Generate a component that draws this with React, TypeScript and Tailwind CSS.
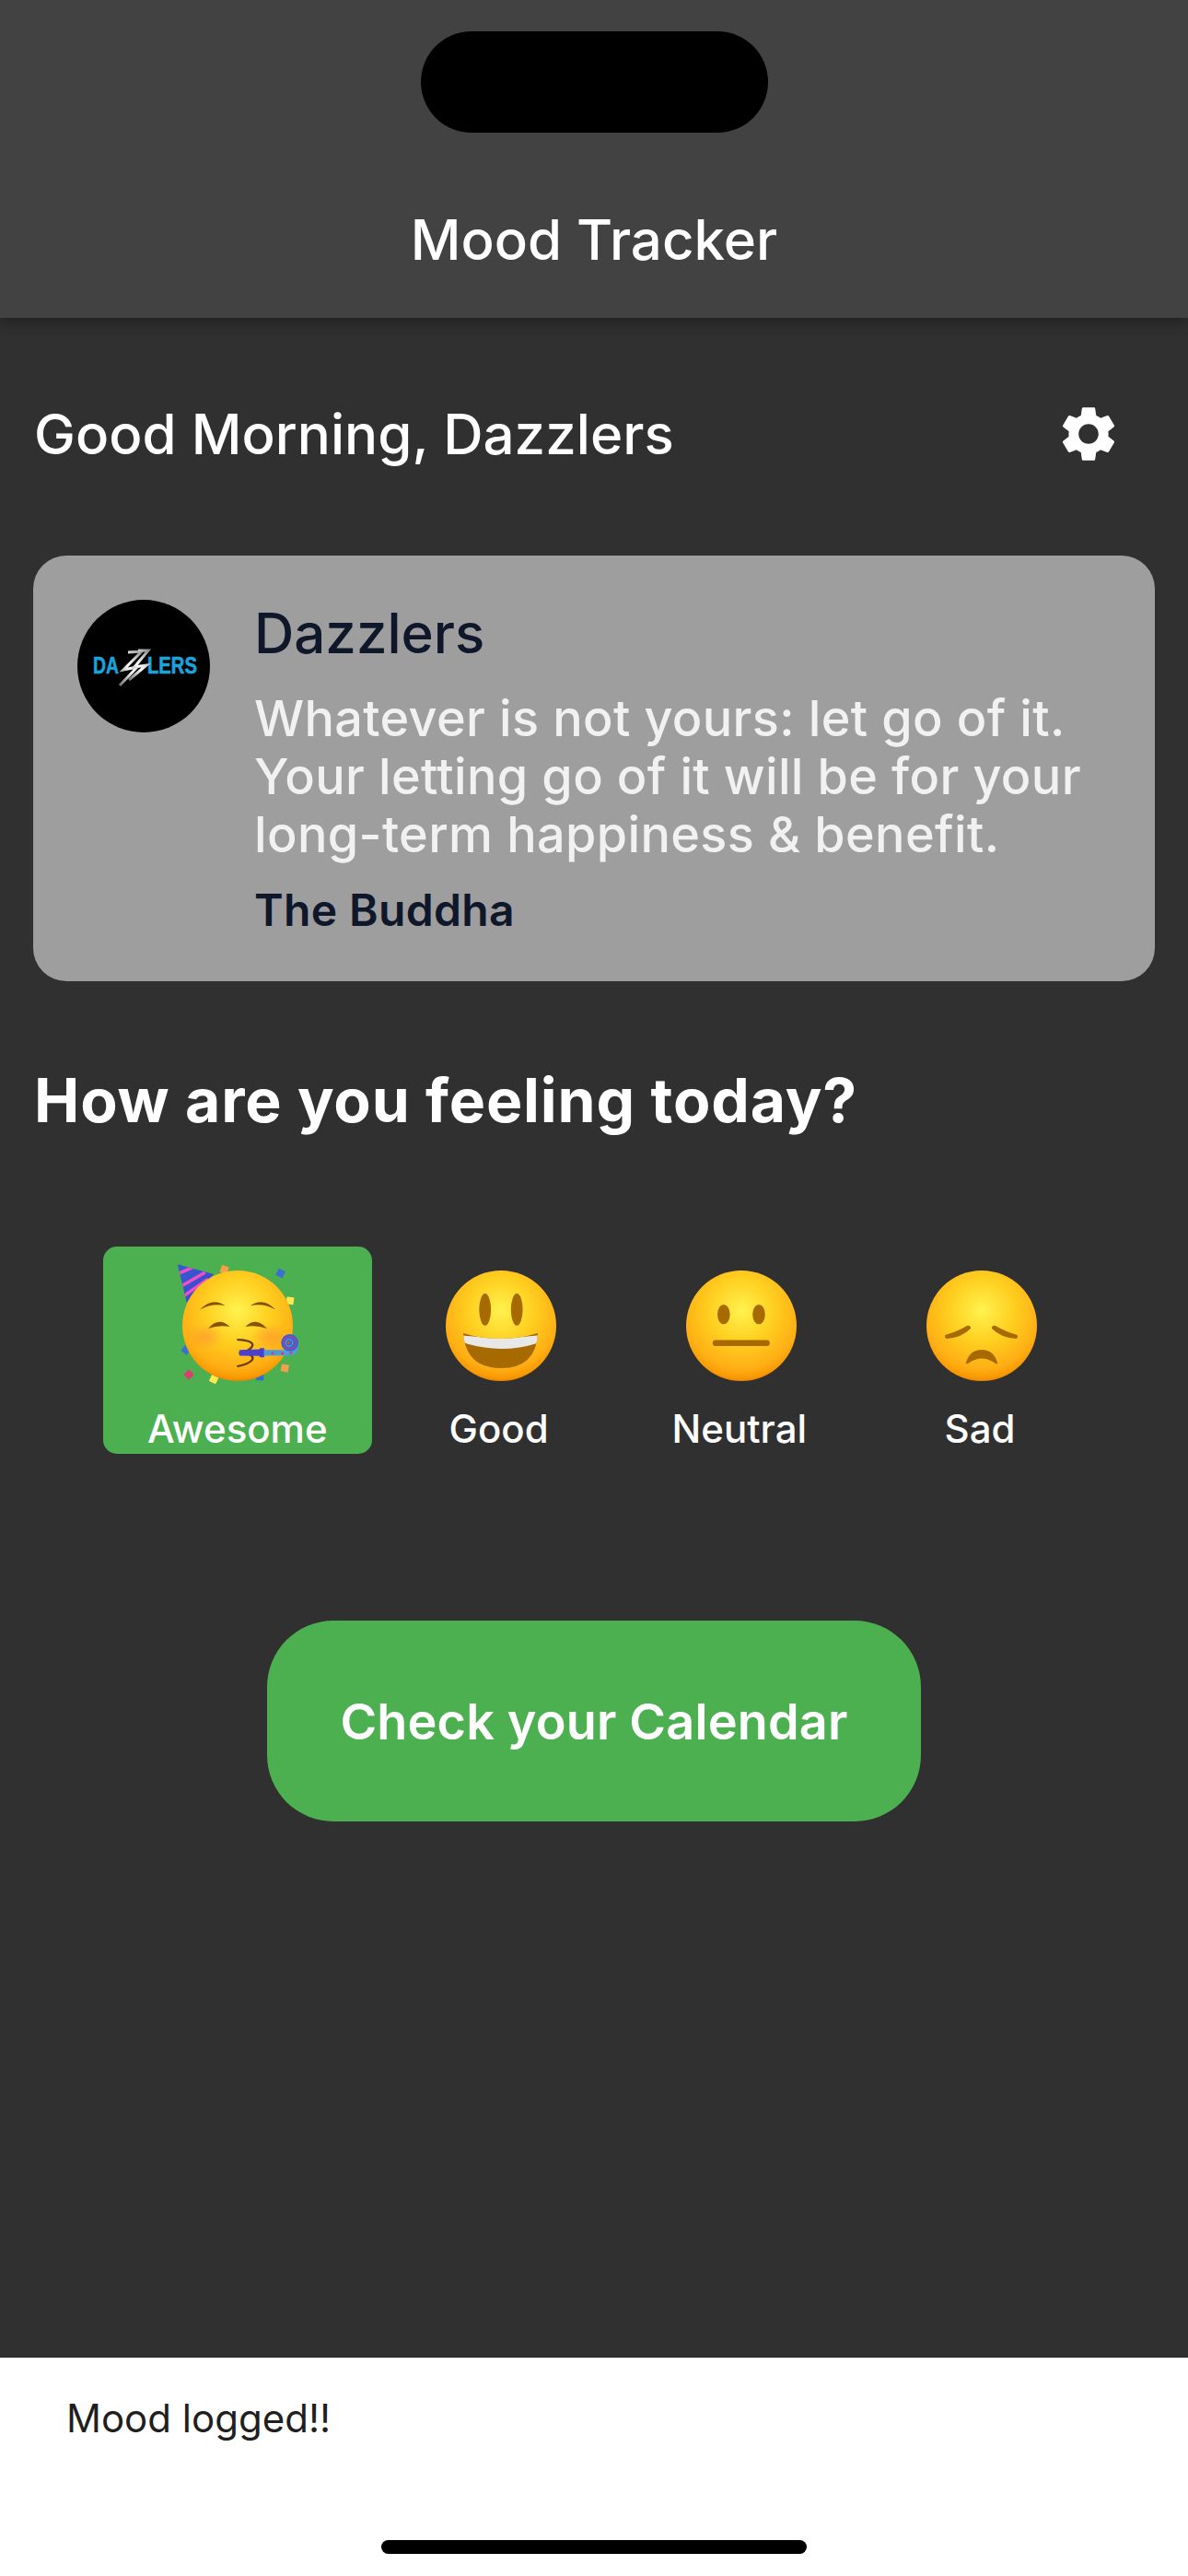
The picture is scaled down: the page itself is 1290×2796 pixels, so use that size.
import React from "react";

function FaceGrad({ id }: { id: string }) {
  return (
    <radialGradient id={id} cx="50%" cy="36%" r="65%">
      <stop offset="0%" stopColor="#FFF24F" />
      <stop offset="45%" stopColor="#FFCF20" />
      <stop offset="82%" stopColor="#FFAE14" />
      <stop offset="94%" stopColor="#F89A05" />
      <stop offset="100%" stopColor="#E47F00" />
    </radialGradient>
  );
}

function GoodFace() {
  return (
    <svg width="120" height="120" viewBox="0 0 120 120" className="block">
      <defs>
        <FaceGrad id="g1" />
        <clipPath id="mouth"><path d="M19 68 Q60 80 100 68 Q98 106 60 106 Q22 106 19 68Z" /></clipPath>
      </defs>
      <circle cx="60" cy="60" r="60" fill="url(#g1)" />
      <ellipse cx="42.7" cy="42.4" rx="6.4" ry="17.3" fill="#A66A00" />
      <ellipse cx="77.2" cy="42.4" rx="6.4" ry="17.3" fill="#A66A00" />
      <path d="M19 68 Q60 80 100 68 Q98 106 60 106 Q22 106 19 68Z" fill="#A66A00" />
      <g clipPath="url(#mouth)">
        <path d="M15 70 Q60 76 104 70 L102 78 Q60 92 18 78Z" fill="#E8E8E8" />
      </g>
    </svg>
  );
}

function NeutralFace() {
  return (
    <svg width="120" height="120" viewBox="0 0 120 120" className="block">
      <defs><FaceGrad id="g2" /></defs>
      <circle cx="60" cy="60" r="60" fill="url(#g2)" />
      <ellipse cx="40.8" cy="47.6" rx="6.8" ry="10.7" fill="#A66A00" />
      <ellipse cx="79" cy="47.6" rx="6.8" ry="10.7" fill="#A66A00" />
      <rect x="28.8" y="75.6" width="62" height="6.5" rx="3" fill="#A66A00" />
    </svg>
  );
}

function SadFace() {
  return (
    <svg width="120" height="120" viewBox="0 0 120 120" className="block">
      <defs><FaceGrad id="g3" /></defs>
      <circle cx="60" cy="60" r="60" fill="url(#g3)" />
      <path d="M20.5 70 Q34 66 44 60 Q48 59 48 63 Q38 73 22 74 Q19 73 20.5 70Z" fill="#A66A00" />
      <path d="M98.5 70 Q85 66 75 60 Q71 59 71 63 Q81 73 97 74 Q100 73 98.5 70Z" fill="#A66A00" />
      <path d="M43 100 Q47 86 60 86 Q73 86 77 100 Q78 102 75 101 Q60 90 45 101 Q42 102 43 100Z" fill="#A66A00" />
    </svg>
  );
}

function PartyFace() {
  const confetti: [number, number, string, number][] = [
    [434, 115, "#F4A04A", 20],
    [521, 150, "#DB3F6B", 25],
    [616, 127, "#3B6FD1", 25],
    [647, 216, "#FCE94F", 8],
    [310, 375, "#3B6FD1", 40],
    [319, 455, "#DB3F6B", 45],
    [400, 470, "#FCE94F", 25],
    [549, 462, "#2D6BD8", 0],
    [630, 434, "#F4A04A", 10],
  ];
  return (
    <svg width="120" height="120" viewBox="298 118 358 358" className="block overflow-visible">
      <defs>
        <FaceGrad id="g4" />
        <radialGradient id="blush">
          <stop offset="0%" stopColor="#FF8A3C" stopOpacity="0.5" />
          <stop offset="100%" stopColor="#FF8A3C" stopOpacity="0" />
        </radialGradient>
        <linearGradient id="hat" x1="0" y1="0" x2="1" y2="1">
          <stop offset="0%" stopColor="#2F5FD0" />
          <stop offset="100%" stopColor="#4A3FCF" />
        </linearGradient>
        <clipPath id="hatClip"><path d="M283 100 Q290 96 298 102 L400 130 L312 222Z" /></clipPath>
      </defs>
      <path d="M283 100 Q290 96 298 102 L400 130 L312 222Z" fill="url(#hat)" />
      <g clipPath="url(#hatClip)" stroke="#F24FC0" strokeWidth="10" fill="none">
        <path d="M285 128 L332 108" />
        <path d="M296 168 L372 124" />
        <path d="M304 200 L380 146" />
      </g>
      {confetti.map(([x, y, c, r], i) => (
        <rect key={i} x={x - 12} y={y - 12} width="24" height="24" rx="2" fill={c} transform={`rotate(${r} ${x} ${y})`} />
      ))}
      <circle cx="477" cy="297" r="179" fill="url(#g4)" />
      <ellipse cx="372" cy="332" rx="60" ry="42" fill="url(#blush)" />
      <ellipse cx="582" cy="332" rx="60" ry="42" fill="url(#blush)" />
      <path d="M355 245 Q395 203 437 232 Q395 222 355 245Z" fill="#8A5200" />
      <path d="M518 232 Q560 203 600 245 Q560 222 518 232Z" fill="#8A5200" />
      <path d="M382 306 Q415 266 452 300 Q415 294 382 306Z" fill="#8A5200" />
      <path d="M502 300 Q537 266 572 306 Q537 294 502 300Z" fill="#8A5200" />
      <path d="M478 342 Q530 345 525 362 Q518 378 490 384 Q535 390 524 408 Q510 422 478 428" fill="none" stroke="#6B3F00" strokeWidth="7" strokeLinecap="round" />
      <path d="M484 375 L552 373 L552 395 L484 394 Q478 385 484 375Z" fill="#4A3FCF" />
      <rect x="548" y="369" width="16" height="30" rx="3" fill="#4A3FCF" />
      <path d="M562 375 L640 375 Q665 380 672 360 L674 370 Q668 393 645 393 L562 394Z" fill="#4F9BD8" />
      <circle cx="590" cy="386" r="4" fill="#D9318A" />
      <circle cx="622" cy="387" r="4" fill="#D9318A" />
      <circle cx="650" cy="385" r="4" fill="#D9318A" />
      <circle cx="646" cy="352" r="28" fill="#3C62CF" />
      <circle cx="646" cy="352" r="20" fill="none" stroke="#D9318A" strokeWidth="3" />
      <circle cx="644" cy="352" r="11" fill="none" stroke="#5AA8E0" strokeWidth="3" />
      <circle cx="642" cy="352" r="5" fill="#B5651D" />
    </svg>
  );
}

function Avatar() {
  return (
    <svg width="144" height="144" viewBox="0 0 144 144" className="block shrink-0">
      <defs>
        <linearGradient id="bolt" x1="1" y1="0" x2="0" y2="1">
          <stop offset="0%" stopColor="#8f8f8f" />
          <stop offset="50%" stopColor="#ffffff" />
          <stop offset="100%" stopColor="#6f6f6f" />
        </linearGradient>
      </defs>
      <circle cx="72" cy="72" r="72" fill="#000" />
      <text x="17" y="80" fill="#1BA3DC" stroke="#1BA3DC" strokeWidth="0.6" fontFamily="'Liberation Sans', sans-serif" fontWeight="700" fontSize="25" textLength="28" lengthAdjust="spacingAndGlyphs">DA</text>
      <text x="76" y="80" fill="#1BA3DC" stroke="#1BA3DC" strokeWidth="0.6" fontFamily="'Liberation Sans', sans-serif" fontWeight="700" fontSize="25" textLength="54" lengthAdjust="spacingAndGlyphs">LERS</text>
      <path d="M55 57 L70 56 L50 76 L65 73 L46 93" fill="none" stroke="url(#bolt)" strokeWidth="3" strokeLinejoin="miter" />
      <path d="M66 55 L77 55 L62 73 L75 71 L56 87" fill="none" stroke="url(#bolt)" strokeWidth="3" strokeLinejoin="miter" />
    </svg>
  );
}

function Mood({ label, active, children }: { label: string; active?: boolean; children: React.ReactNode }) {
  return (
    <div className={`flex flex-col items-center h-[225px] px-12 pt-[26px] rounded-[15px] ${active ? "bg-[#4CAF50]" : ""}`}>
      {children}
      <span className={`mt-[27px] text-[42px] leading-[50px] font-medium text-white whitespace-nowrap ${active ? "" : "-translate-x-[2px]"}`}>{label}</span>
    </div>
  );
}

export default function App() {
  return (
    <div className="w-[1290px] h-[2796px] flex flex-col bg-[#303030] overflow-hidden font-['Inter',sans-serif]">
      <header className="relative z-10 h-[345px] bg-[#424242] shadow-[0_6px_14px_rgba(0,0,0,0.3)] flex flex-col items-center pt-[34px]">
        <div className="w-[377px] h-[110px] rounded-[55px] bg-black" />
        <h1 className="mt-[80px] text-[60px] leading-[72px] font-medium text-white">Mood Tracker</h1>
      </header>

      <main className="flex-1 px-9 flex flex-col">
        <div className="mt-[90px] h-[72px] flex items-center justify-between pr-[36px]">
          <span className="text-[60px] leading-[72px] font-medium text-white pl-px tracking-[0.05px]">Good Morning, Dazzlers</span>
          <svg width="72" height="72" viewBox="0 0 24 24" fill="#fff"><path d="M19.14 12.94c.04-.3.06-.61.06-.94 0-.32-.02-.64-.07-.94l2.03-1.58c.18-.14.23-.41.12-.61l-1.92-3.32c-.12-.22-.37-.29-.59-.22l-2.39.96c-.5-.38-1.03-.7-1.62-.94l-.36-2.54c-.04-.24-.24-.41-.48-.41h-3.84c-.24 0-.43.17-.47.41l-.36 2.54c-.59.24-1.13.57-1.62.94l-2.39-.96c-.22-.08-.47 0-.59.22L2.74 8.87c-.12.21-.08.47.12.61l2.03 1.58c-.05.3-.09.63-.09.94s.02.64.07.94l-2.03 1.58c-.18.14-.23.41-.12.61l1.92 3.32c.12.22.37.29.59.22l2.39-.96c.5.38 1.03.7 1.62.94l.36 2.54c.05.24.24.41.48.41h3.84c.24 0 .44-.17.47-.41l.36-2.54c.59-.24 1.13-.56 1.62-.94l2.39.96c.22.08.47 0 .59-.22l1.92-3.32c.12-.22.07-.47-.12-.61l-2.01-1.58zM12 15.6c-1.98 0-3.6-1.62-3.6-3.6s1.62-3.6 3.6-3.6 3.6 1.62 3.6 3.6-1.62 3.6-3.6 3.6z" /></svg>
        </div>

        <section className="mt-[96px] h-[462px] rounded-[36px] bg-[#9E9E9E] flex pl-[48px] pt-[48px] gap-[48px]">
          <Avatar />
          <div className="flex flex-col">
            <span className="text-[60px] leading-[72px] font-medium text-[#0F172A]">Dazzlers</span>
            <p className="mt-[25px] text-[54px] leading-[63px] font-medium text-[#F1F1F1] whitespace-nowrap tracking-[0.35px]">
              Whatever is not yours: let go of it.<br />Your letting go of it will be for your<br />long-term happiness &amp; benefit.
            </p>
            <span className="mt-[22px] text-[48px] leading-[58px] font-semibold text-[#0F172A] tracking-[0.35px]">The Buddha</span>
          </div>
        </section>

        <h2 className="mt-[89px] pl-px text-[66px] leading-[80px] font-bold text-white tracking-[0.85px]">How are you feeling today?</h2>

        <div className="mt-[119px] flex justify-center gap-8 -ml-[4px]">
          <Mood label="Awesome" active><PartyFace /></Mood>
          <Mood label="Good"><GoodFace /></Mood>
          <Mood label="Neutral"><NeutralFace /></Mood>
          <Mood label="Sad"><SadFace /></Mood>
        </div>

        <div className="mt-[181px] flex justify-center">
          <button className="w-[710px] h-[218px] rounded-[72px] bg-[#4CAF50] text-[54px] font-semibold text-white tracking-[0.15px]">Check your Calendar</button>
        </div>
      </main>

      <footer className="h-[237px] bg-white flex flex-col">
        <span className="mt-[41px] ml-[72px] text-[42px] leading-[50px] text-[#1F1F1F]">Mood logged!!</span>
        <div className="mt-[107px] mx-auto w-[462px] h-[15px] rounded-full bg-black" />
      </footer>
    </div>
  );
}
